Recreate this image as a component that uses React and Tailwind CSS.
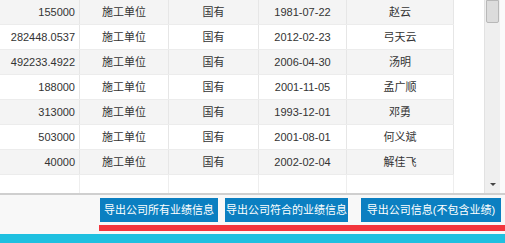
const rows = [
  { amount: '155000', type: '施工单位', nature: '国有', date: '1981-07-22', name: '赵云' },
  { amount: '282448.0537', type: '施工单位', nature: '国有', date: '2012-02-23', name: '弓天云' },
  { amount: '492233.4922', type: '施工单位', nature: '国有', date: '2006-04-30', name: '汤明' },
  { amount: '188000', type: '施工单位', nature: '国有', date: '2001-11-05', name: '孟广顺' },
  { amount: '313000', type: '施工单位', nature: '国有', date: '1993-12-01', name: '邓勇' },
  { amount: '503000', type: '施工单位', nature: '国有', date: '2001-08-01', name: '何义斌' },
  { amount: '40000', type: '施工单位', nature: '国有', date: '2002-02-04', name: '解佳飞' },
]

function Row({ row, odd }) {
  return (
    <div className={`flex h-[25px] items-center border-b border-[#ececec] ${odd ? 'bg-[#f4f4f4]' : 'bg-white'}`}>
      <div className="w-[80px] h-full flex items-center justify-end pr-[4px] border-r border-[#e6e6e6]">{row.amount}</div>
      <div className="w-[89px] h-full flex items-center justify-center border-r border-[#e6e6e6]">{row.type}</div>
      <div className="w-[90px] h-full flex items-center justify-center border-r border-[#e6e6e6]">{row.nature}</div>
      <div className="w-[88px] h-full flex items-center justify-center border-r border-[#e6e6e6]">{row.date}</div>
      <div className="w-[107px] h-full flex items-center justify-center border-r border-[#e6e6e6]">{row.name}</div>
    </div>
  )
}

export default function App() {
  return (
    <div
      className="w-[505px] h-[243px] overflow-hidden bg-white text-[11px] text-[#333]"
      style={{ fontFamily: '"Liberation Sans", "Noto Sans CJK SC", sans-serif' }}
    >
      <div className="flex h-[193px]">
        <div className="w-[454px]">
          {rows.map((r, i) => (
            <Row key={i} row={r} odd={i % 2 === 0} />
          ))}
          <div className="flex h-[18px]">
            <div className="w-[80px] border-r border-[#eeeeee]" />
            <div className="w-[89px] border-r border-[#eeeeee]" />
            <div className="w-[90px] border-r border-[#eeeeee]" />
            <div className="w-[88px] border-r border-[#eeeeee]" />
            <div className="w-[107px] border-r border-[#eeeeee]" />
          </div>
        </div>
        <div className="w-[30px]" />
        {/* scrollbar */}
        <div className="w-[16px] h-full bg-[#efefef] border-l border-[#e2e2e2] flex flex-col justify-between">
          <div className="mx-[1px] h-[23px] bg-[#dcdcdc] border border-[#b8b8b8] rounded-b-[2px]" />
          <div className="h-[14px] flex items-center justify-center mb-[2px]">
            <span className="w-0 h-0 border-l-[3px] border-r-[3px] border-t-[3px] border-l-transparent border-r-transparent border-t-[#444]" />
          </div>
        </div>
        <div className="w-[5px] bg-[#fafafa]" />
      </div>
      <div className="h-[2px] bg-[#cfcfcf]" />
      <div className="bg-[#f8f8f8] h-[48px] flex flex-col">
        <div className="flex pl-[100px] pt-[3px] h-[30px]">
          <button className="w-[118px] h-[24px] bg-[#0b7fc1] text-white text-[11px] whitespace-nowrap">导出公司所有业绩信息</button>
          <button className="ml-[7px] w-[123px] h-[24px] bg-[#0b7fc1] text-white text-[11px] whitespace-nowrap">导出公司符合的业绩信息</button>
          <button className="ml-[13px] w-[140px] h-[24px] bg-[#0b7fc1] text-white text-[11px] whitespace-nowrap">导出公司信息(不包含业绩)</button>
        </div>
        <div className="ml-[99px] h-[6px] bg-[#f2353d]" />
        <div className="h-[3px]" />
        <div className="flex-1 bg-[#1fc0e0]" />
      </div>
    </div>
  )
}
